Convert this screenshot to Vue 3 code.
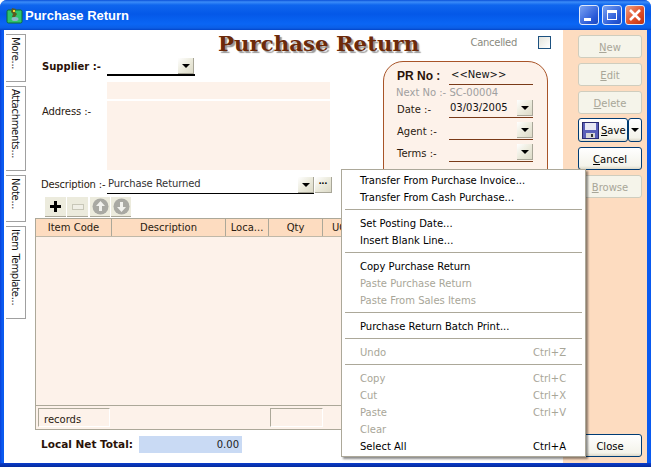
<script setup>
const tabs = [
  { label: 'More...', cls: 'tab-more' },
  { label: 'Attachments...', cls: 'tab-att' },
  { label: 'Note...', cls: 'tab-note' },
  { label: 'Item Template...', cls: 'tab-item' }
]
const columns = [
  { label: 'Item Code', cls: 'c-code' },
  { label: 'Description', cls: 'c-desc' },
  { label: 'Loca...', cls: 'c-loc' },
  { label: 'Qty', cls: 'c-qty' },
  { label: 'UOM', cls: 'c-uom' }
]
const menu = [
  { t: 'Transfer From Purchase Invoice...' },
  { t: 'Transfer From Cash Purchase...' },
  { sep: true },
  { t: 'Set Posting Date...' },
  { t: 'Insert Blank Line...' },
  { sep: true },
  { t: 'Copy Purchase Return' },
  { t: 'Paste Purchase Return', off: true },
  { t: 'Paste From Sales Items', off: true },
  { sep: true },
  { t: 'Purchase Return Batch Print...' },
  { sep: true },
  { t: 'Undo', k: 'Ctrl+Z', off: true },
  { sep: true },
  { t: 'Copy', k: 'Ctrl+C', off: true },
  { t: 'Cut', k: 'Ctrl+X', off: true },
  { t: 'Paste', k: 'Ctrl+V', off: true },
  { t: 'Clear', off: true },
  { t: 'Select All', k: 'Ctrl+A' }
]
</script>

<template>
  <div class="window">
    <header class="titlebar">
      <svg class="app-icon" width="17" height="17" viewBox="0 0 17 17">
        <rect x="1" y="3" width="15" height="13" rx="1.5" fill="#2fc46a" stroke="#0c6a3a" />
        <path d="M6 1l4 1-1 3 2 2-2 3H6l1-3-2-2z" fill="#5a5a20" />
        <path d="M7 3h2v2H7z" fill="#f5d030" />
        <ellipse cx="9" cy="12" rx="3.5" ry="2" fill="#8ab8c8" />
      </svg>
      <span class="title-text">Purchase Return</span>
      <div class="win-btns">
        <span class="wb wb-min"><i class="min-bar"></i></span>
        <span class="wb wb-max"><i class="max-box"></i></span>
        <span class="wb wb-close">
          <svg width="14" height="14" viewBox="0 0 14 14"><path d="M2 2l10 10M12 2L2 12" stroke="#fff" stroke-width="2.6" /></svg>
        </span>
      </div>
    </header>

    <div class="client">
      <nav class="tabs">
        <div v-for="tab in tabs" :key="tab.label" class="tab" :class="tab.cls"><span>{{ tab.label }}</span></div>
      </nav>

      <main class="main">
        <div class="head-row">
          <h1 class="big-title">Purchase Return</h1>
          <div class="cancelled"><span>Cancelled</span><i class="check"></i></div>
        </div>

        <div class="form-row">
          <div class="form-left">
            <div class="supplier-row">
              <b class="supplier-label">Supplier :-</b>
              <div class="supplier-combo"><button class="drop"><i class="arrow"></i></button></div>
            </div>
            <div class="name-line"></div>
            <div class="addr-row">
              <span class="addr-label">Address :-</span>
              <div class="addr-box"></div>
            </div>
          </div>

          <section class="pr-box">
            <div class="pr-no">
              <b class="pr-label">PR No :</b>
              <span class="pr-value">&lt;&lt;New&gt;&gt;</span>
            </div>
            <div class="pr-next"><span>Next No :-</span> <span>SC-00004</span></div>
            <div class="pr-field pr-date">
              <span class="pr-flabel">Date :-</span>
              <div class="pr-combo"><span class="pr-text">03/03/2005</span><button class="drop"><i class="arrow"></i></button></div>
            </div>
            <div class="pr-field">
              <span class="pr-flabel">Agent :-</span>
              <div class="pr-combo"><span></span><button class="drop"><i class="arrow"></i></button></div>
            </div>
            <div class="pr-field">
              <span class="pr-flabel">Terms :-</span>
              <div class="pr-combo"><span></span><button class="drop"><i class="arrow"></i></button></div>
            </div>
          </section>
        </div>

        <div class="desc-row">
          <span class="desc-label">Description :-</span>
          <div class="desc-combo">
            <span>Purchase Returned</span>
            <button class="drop"><i class="arrow"></i></button>
          </div>
          <button class="drop dots">...</button>
        </div>

        <div class="toolbar">
          <button class="tb">
            <svg width="11" height="11" viewBox="0 0 11 11"><path d="M4 0h3v4h4v3H7v4H4V7H0V4h4z" fill="#000" /></svg>
          </button>
          <button class="tb">
            <svg width="12" height="6" viewBox="0 0 12 6"><rect x=".5" y=".5" width="11" height="5" fill="#f0efe6" stroke="#c8c7b8" /></svg>
          </button>
          <button class="tb tb-round tb-gap">
            <svg width="17" height="17" viewBox="0 0 17 17"><circle cx="8.5" cy="8.5" r="8" fill="#a9a9a3" /><path d="M8.5 3l4.5 5h-3v5h-3V8H4z" fill="#f2f2ee" /></svg>
          </button>
          <button class="tb tb-round">
            <svg width="17" height="17" viewBox="0 0 17 17"><circle cx="8.5" cy="8.5" r="8" fill="#a9a9a3" /><path d="M8.5 14L4 9h3V4h3v5h3z" fill="#f2f2ee" /></svg>
          </button>
        </div>

        <div class="grid">
          <div class="grid-head">
            <div v-for="c in columns" :key="c.label" class="col" :class="c.cls">{{ c.label }}</div>
          </div>
          <div class="grid-body"></div>
          <div class="grid-foot">
            <div class="foot-cell foot-records">records</div>
            <div class="foot-cell foot-qty"></div>
          </div>
        </div>

        <div class="total-row">
          <b class="total-label">Local Net Total:</b>
          <div class="total-value">0.00</div>
        </div>
      </main>

      <aside class="side">
        <button class="btn off"><u>N</u>ew</button>
        <button class="btn off"><u>E</u>dit</button>
        <button class="btn off"><u>D</u>elete</button>
        <div class="save-group">
          <button class="btn save">
            <svg width="17" height="17" viewBox="0 0 17 17">
              <rect x=".5" y=".5" width="16" height="16" fill="#5a5fb8" stroke="#2a2a70" />
              <rect x="3" y="1" width="11" height="7" fill="#e8e8f4" />
              <rect x="4" y="11" width="9" height="5" fill="#d8d8d8" />
              <rect x="9" y="12" width="2" height="3" fill="#333" />
            </svg>
            <span><u>S</u>ave</span>
          </button>
          <button class="btn save-drop"><i class="arrow"></i></button>
        </div>
        <button class="btn"><u>C</u>ancel</button>
        <button class="btn off"><u>B</u>rowse</button>
        <button class="btn close">Close</button>
      </aside>
    </div>

    <div class="ctx-menu">
      <template v-for="(m, i) in menu" :key="i">
        <div v-if="m.sep" class="ctx-sep"></div>
        <div v-else class="ctx-item" :class="{ 'ctx-off': m.off }">
          <span class="ctx-text">{{ m.t }}</span>
          <span class="ctx-key">{{ m.k }}</span>
        </div>
      </template>
    </div>
  </div>
</template>

<style>
html, body { background: #fff; }
</style>

<style scoped>
.window {
  position: relative;
  width: 651px;
  height: 467px;
  overflow: hidden;
  display: flex;
  flex-direction: column;
  background:
    linear-gradient(180deg, transparent 463px, #0a3ccc 463px, #062a9a 467px),
    linear-gradient(90deg, #0a3fd8 0, #0a5af0 2px, #0a5af0 100%);
  border-radius: 7px 7px 0 0;
  font-family: "DejaVu Sans", sans-serif;
  font-size: 10px;
  color: #2a1a10;
}
.titlebar {
  height: 30px;
  flex: none;
  display: flex;
  align-items: center;
  padding: 0 6px 0 6px;
  background: linear-gradient(180deg, #0a50d8 0, #3b8cf8 2px, #0f66ee 5px, #0458e8 14px, #0a66f5 24px, #0b5ee6 28px, #0345c8 30px);
}
.app-icon { flex: none; margin-right: 2px; }
.title-text {
  font-family: "Liberation Sans", sans-serif;
  font-size: 13px;
  font-weight: 700;
  color: #fff;
}
.win-btns { margin-left: auto; display: flex; gap: 3px; }
.wb {
  width: 20px;
  height: 20px;
  box-sizing: border-box;
  border: 1px solid #dfe8fa;
  border-radius: 3px;
  display: flex;
  align-items: center;
  justify-content: center;
  position: relative;
  background: linear-gradient(135deg, #7aa2f2, #2a5ad8 70%, #1c48c0);
}
.wb-close { background: linear-gradient(135deg, #f0a080, #e0502a 55%, #c03010); }
.min-bar { position: absolute; left: 4px; bottom: 3px; width: 7px; height: 3px; background: #fff; }
.max-box { width: 10px; height: 10px; box-sizing: border-box; border: 1px solid #fff; border-top-width: 3px; }

.client {
  flex: 1;
  display: flex;
  margin: 0 4px 4px;
  background: #fff;
  min-height: 0;
}

.tabs {
  width: 30px;
  flex: none;
  box-sizing: border-box;
  padding: 4px 0 0 2px;
  display: flex;
  flex-direction: column;
}
.tab {
  box-sizing: border-box;
  width: 20px;
  border: 1px solid #a0a0a0;
  border-left: none;
  writing-mode: vertical-rl;
  padding-top: 2px;
  display: flex;
  align-items: center;
  color: #111;
  letter-spacing: -0.3px;
}
.tab-more { height: 48px; margin-bottom: 4px; }
.tab-att { height: 85px; margin-bottom: 4px; }
.tab-note { height: 47px; margin-bottom: 4px; }
.tab-item { height: 93px; }

.main {
  width: 529px;
  flex: none;
  display: flex;
  flex-direction: column;
}
.head-row {
  height: 27px;
  flex: none;
  display: flex;
  align-items: flex-start;
}
.big-title {
  margin: 0 0 0 184px;
  font-family: "DejaVu Serif", serif;
  font-size: 21.3px;
  line-height: 27px;
  font-weight: 700;
  color: #6c2a0a;
  text-shadow: 2px 2px 1px #9a9a9a;
  white-space: nowrap;
}
.cancelled {
  margin-left: auto;
  margin-right: 12px;
  display: flex;
  align-items: center;
  color: #8a8a80;
  height: 24px;
  letter-spacing: -0.3px;
}
.check {
  width: 13px;
  height: 13px;
  box-sizing: border-box;
  border: 1px solid #1c5180;
  margin-left: 21px;
  background: linear-gradient(135deg, #e4e4dc, #fff);
}

.form-row { display: flex; height: 115px; flex: none; }
.form-left { width: 349px; flex: none; }
.supplier-row { display: flex; height: 19px; }
.supplier-label { margin-left: 8px; padding-top: 4px; box-sizing: border-box; width: 65px; font-size: 10px; color: #2a1208; }
.supplier-combo {
  width: 88px;
  height: 19px;
  box-sizing: border-box;
  border-bottom: 2px solid #000;
  display: flex;
  justify-content: flex-end;
  padding-right: 1px;
  padding-top: 1px;
}
.drop {
  width: 16px;
  height: 16px;
  padding: 0;
  box-sizing: border-box;
  border: none;
  border-right: 1px solid #a8a698;
  border-bottom: 1px solid #a8a698;
  background: linear-gradient(135deg, #fff, #ecebdd 50%, #dcdac8);
  display: flex;
  align-items: center;
  justify-content: center;
  flex: none;
}
.arrow {
  width: 0;
  height: 0;
  border: 4px solid transparent;
  border-top: 4px solid #000;
  border-bottom: none;
}
.name-line { margin: 6px 0 0 73px; width: 223px; height: 17px; background: #fdf2ea; }
.addr-row { display: flex; margin-top: 2px; }
.addr-label { margin-left: 8px; width: 65px; padding-top: 5px; letter-spacing: -0.1px; }
.addr-box { width: 223px; height: 69px; background: #fdf2ea; }

.pr-box {
  width: 165px;
  height: 118px;
  margin-top: 4px;
  box-sizing: border-box;
  flex: none;
  background: #fdf2ea;
  border: 1px solid #a85428;
  border-radius: 20px 20px 0 0;
  padding: 6px 0 0 13px;
}
.pr-no { display: flex; height: 16px; width: 136px; align-items: center; }
.pr-label { width: 52px; font-family: "Liberation Sans", sans-serif; font-size: 12px; color: #2a1208; flex: none; }
.pr-value { flex: 1; height: 16px; line-height: 14px; border-bottom: 1px solid #7a3a18; padding-left: 2px; color: #111; }
.pr-next { height: 17px; line-height: 18px; color: #a0a0a0; margin-left: -1px; white-space: nowrap; }
.pr-field { display: flex; height: 22px; width: 136px; }
.pr-date { margin-top: -1px; }
.pr-flabel { width: 52px; flex: none; padding-top: 4px; line-height: 12px; }
.pr-combo {
  flex: 1;
  height: 18px;
  box-sizing: border-box;
  border-bottom: 1px solid #7a3a18;
  display: flex;
  justify-content: space-between;
  align-items: flex-start;
  line-height: 15px;
  color: #111;
}
.pr-text { padding-left: 1px; line-height: 16px; }

.desc-row { display: flex; height: 20px; margin-top: 5px; flex: none; }
.desc-label { margin-left: 7px; width: 66px; padding-top: 1px; line-height: 14px; white-space: nowrap; letter-spacing: -0.2px; }
.desc-combo {
  height: 17px;
  box-sizing: border-box;
  border-bottom: 1px solid #000;
  display: flex;
  justify-content: flex-end;
  align-items: flex-start;
  width: 207px;
}
.desc-combo span { margin-right: auto; padding-left: 1px; line-height: 14px; color: #333; letter-spacing: -0.1px; }
.dots { margin-left: 1px; width: 17px; font-size: 10px; font-weight: 700; line-height: 8px; color: #000; align-items: flex-start; }

.toolbar { display: flex; height: 21px; padding-left: 11px; flex: none; }
.tb {
  width: 21px;
  height: 20px;
  padding: 0;
  margin-right: 1px;
  border: none;
  border-bottom: 1px solid #a8a698;
  background: #ecebdd;
  display: flex;
  align-items: center;
  justify-content: center;
  box-sizing: border-box;
}
.tb-gap { margin-left: 1px; }
.tb-round { width: 20px; }

.grid {
  width: 524px;
  margin-left: 1px;
  height: 212px;
  flex: none;
  box-sizing: border-box;
  border: 1px solid #aca899;
  border-right: none;
  display: flex;
  flex-direction: column;
}
.grid-head { display: flex; height: 18px; flex: none; background: #fddcc0; border-bottom: 1px solid #c0b8a8; box-sizing: border-box; }
.col {
  box-sizing: border-box;
  border-right: 1px solid #aca899;
  text-align: center;
  line-height: 17px;
  color: #2a1a10;
  overflow: hidden;
  white-space: nowrap;
}
.c-code { width: 76px; }
.c-desc { width: 114px; }
.c-loc { width: 43px; }
.c-qty { width: 54px; }
.c-uom { width: 40px; text-align: left; padding-left: 9px; }
.grid-body { flex: 1; background: #fdf2ea; border-bottom: 1px solid #aca899; }
.grid-foot { height: 23px; flex: none; background: #fdf2ea; display: flex; align-items: flex-start; padding: 2px 0 0 2px; box-sizing: border-box; }
.foot-cell {
  height: 19px;
  box-sizing: border-box;
  border: 1px solid;
  border-color: #aca899 #fff #fff #aca899;
  line-height: 21px;
}
.foot-records { width: 72px; padding-left: 5px; }
.foot-qty { width: 53px; margin-left: 160px; }

.total-row { display: flex; align-items: center; height: 33px; flex: none; padding: 0 0 5px 7px; box-sizing: border-box; }
.total-label { width: 98px; color: #2a1208; white-space: nowrap; font-size: 10.5px; margin-top: -1px; }
.total-value {
  width: 103px;
  height: 17px;
  line-height: 17px;
  background: #c9daf4;
  text-align: right;
  padding-right: 3px;
  box-sizing: border-box;
  color: #222;
}

.side {
  flex: 1;
  background: #fddcc0;
  display: flex;
  flex-direction: column;
  align-items: flex-start;
  padding: 5px 0 6px 15px;
  box-sizing: border-box;
  gap: 5px;
}
.btn {
  width: 64px;
  height: 23px;
  padding: 1px 0 0;
  box-sizing: border-box;
  border: 1px solid #003c74;
  border-radius: 3px;
  background: linear-gradient(180deg, #fff, #f4f3ea 85%, #dcd8c8);
  font: inherit;
  color: #000;
}
.btn.off { background: #f5f4ea; border-color: #cfcdbe; color: #a8a698; }
.save-group { display: flex; margin-top: -1px; }
.save { width: 50px; display: flex; align-items: center; gap: 2px; padding: 0 0 0 3px; height: 24px; }
.save-drop { width: 14px; height: 24px; padding: 0; display: flex; align-items: center; justify-content: center; }
.close { margin-top: auto; }

.ctx-menu {
  position: absolute;
  left: 341px;
  top: 169px;
  width: 245px;
  height: 288px;
  box-sizing: border-box;
  background: #fff;
  border: 1px solid #aca899;
  box-shadow: 2px 2px 2px rgba(0, 0, 0, 0.45);
  padding: 2px 3px 1px;
  color: #000;
}
.ctx-item { height: 17px; display: flex; line-height: 17px; padding-left: 15px; }
.ctx-text { width: 173px; white-space: nowrap; }
.ctx-off { color: #a8a698; }
.ctx-sep { height: 9px; box-sizing: border-box; padding-top: 3px; }
.ctx-sep::before { content: ""; display: block; height: 1px; background: #aca899; }
</style>
